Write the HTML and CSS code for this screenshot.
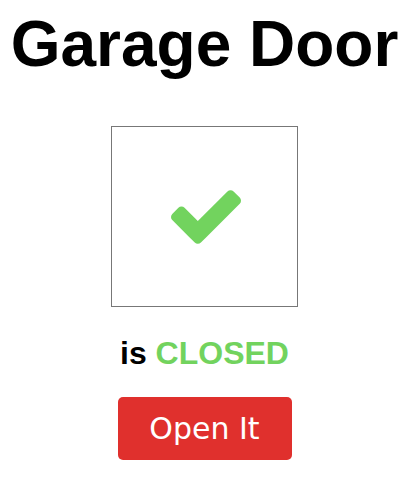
FILE: index.html
```html
<!DOCTYPE html>
<html lang="en">
<head>
<meta charset="utf-8">
<title>Garage Door</title>
<link rel="stylesheet" href="styles.css">
</head>
<body>
<main class="page">
  <h1 class="title">Garage Door</h1>
  <div class="status-box">
    <svg class="check" viewBox="121 334 1550 1188" width="70" height="54" aria-hidden="true">
      <path d="M1671 566q0 40-28 68l-724 724-136 136q-28 28-68 28t-68-28l-136-136-362-362q-28-28-28-68t28-68l136-136q28-28 68-28t68 28l294 295 656-657q28-28 68-28t68 28l136 136q28 28 28 68z"/>
    </svg>
  </div>
  <p class="status">is <span class="state">CLOSED</span></p>
  <button class="action" type="button">Open It</button>
</main>
</body>
</html>
```

FILE: styles.css
```css
html, body {
  margin: 0;
  padding: 0;
  background: #ffffff;
}

.page {
  display: flex;
  flex-direction: column;
  align-items: center;
  padding: 12px 4px 0 0;
  font-family: "Liberation Sans", Arial, sans-serif;
  color: #000000;
}

.title {
  margin: 0;
  font-size: 64px;
  line-height: 64px;
  font-weight: bold;
}

.status-box {
  margin-top: 50px;
  width: 185px;
  height: 179px;
  border: 1px solid #777777;
  display: flex;
  align-items: center;
  justify-content: center;
  padding-left: 3px;
  box-sizing: content-box;
}

.status-box {
  width: 182px;
}

.check {
  display: block;
  fill: #72d35e;
}

.status {
  margin: 30px 0 0;
  font-size: 32px;
  line-height: 32px;
  font-weight: bold;
}

.state {
  color: #72d35e;
}

.action {
  margin-top: 28px;
  width: 174px;
  height: 63px;
  border: none;
  border-radius: 5px;
  background: #e0302d;
  color: #ffffff;
  font-family: "DejaVu Sans", Verdana, sans-serif;
  font-size: 30px;
  padding: 0;
  display: flex;
  align-items: center;
  justify-content: center;
}
```
